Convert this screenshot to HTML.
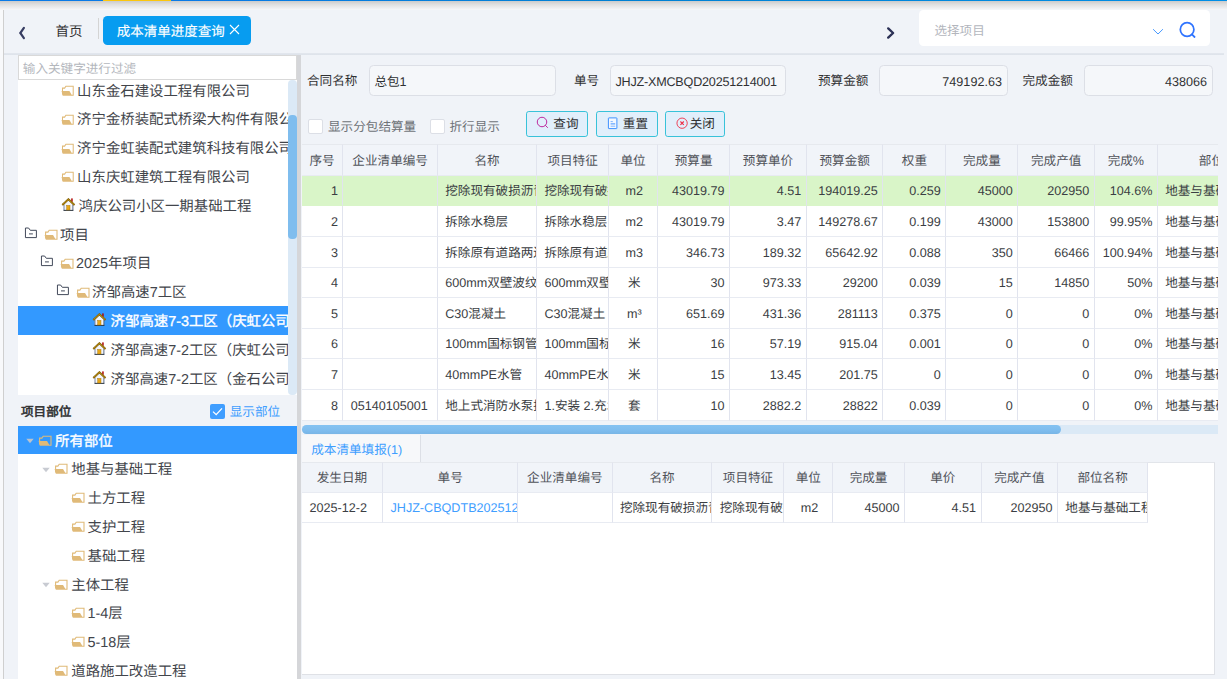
<!DOCTYPE html>
<html lang="zh-CN">
<head>
<meta charset="utf-8">
<title>成本清单进度查询</title>
<style>
*{box-sizing:border-box;margin:0;padding:0}
html,body{width:1227px;height:679px;overflow:hidden}
body{text-rendering:geometricPrecision;position:relative;background:#f0f3f8;font-family:"Liberation Sans",sans-serif;font-size:12.6px;color:#303133}
.abs{position:absolute}
/* top */
#topline{left:0;top:0;width:1227px;height:1px;background:linear-gradient(90deg,#0a7ae6 0%,#0a7ae6 15%,#0080d2 50%,#008ee6 100%)}
#topyellow{left:103px;top:0;width:68px;height:1px;background:#fbc60d}
#topshadow{left:0;top:1px;width:1227px;height:9px;background:linear-gradient(#cbcbcb,#dedede 35%,#f4f5f7 95%,#f0f3f8)}
#leftstrip{left:0;top:10px;width:3px;height:669px;background:#f8f9fb}
#leftline{left:3px;top:10px;width:1px;height:669px;background:#cfcfcf}
#hline{left:4px;top:53px;width:1220px;height:2px;background:linear-gradient(#e3e7ee,#dde2ea)}
/* tabs */
#tabblue{left:103px;top:16px;width:148px;height:29px;background:#079cf0;border-radius:4.5px;color:#fff;-webkit-text-stroke:0.15px #fff;font-size:13.5px;line-height:31px;padding-left:13.8px;white-space:nowrap}
#home{left:55.6px;top:16px;height:29px;line-height:31.4px;font-size:13.5px;color:#303133}
#sep{left:98px;top:18px;width:1px;height:21px;background:#d4d4d4}
/* select */
#selbox{left:919px;top:10px;width:291px;height:36px;background:#fff;border-radius:4.5px}
#selbox span{position:absolute;left:15.4px;top:0;line-height:42.6px;color:#b3b6bd;font-size:12.6px}
/* left panel */
#filter{left:18px;top:55px;width:279px;height:24.5px;background:#fff;border:1px solid #d9d9d9;font-size:12.6px;color:#b4b7bd;line-height:27px;padding-left:3.8px}
#tree1{left:18px;top:79.5px;width:279px;height:315.5px;background:#fff;overflow:hidden}
#tree1 .trow{width:270px;overflow:hidden}
#tree2{left:18px;top:426px;width:279px;height:253px;background:#fff;overflow:hidden}
.trow{position:absolute;left:0;width:279px;height:28.8px;line-height:28.8px;font-size:14.4px;white-space:nowrap;color:#42454b}
.trow.sel{background:#3399ff;color:#fff;-webkit-text-stroke:0.35px #fff}
.trow span{position:absolute;top:2px;margin-left:-0.4px}
.ico{position:absolute}
#strack{left:288px;top:80px;width:8.5px;height:314.5px;background:#dbe9f6;border-radius:4px}
#sthumb{left:288px;top:115px;width:8.5px;height:123.5px;background:#7fbdee;border-radius:4px}
#splitter{left:296.9px;top:55px;width:4px;height:624px;background:#d5d6d9}
#lbl2{left:21px;top:396px;height:30px;line-height:32px;-webkit-text-stroke:0.55px #303133;font-size:12.6px;color:#303133}
#cb2{left:210px;top:404px;width:15px;height:15px;background:#409eff;border-radius:2px}
#cb2l{left:229.7px;top:396px;height:30px;line-height:32.6px;color:#409eff;font-size:12.6px}
/* form */
.flabel{position:absolute;top:65px;height:30px;line-height:32.4px;font-size:12.6px;color:#303133;white-space:nowrap}
.finput{position:absolute;top:65px;height:30.5px;background:#f5f7fa;border:1px solid #dcdfe6;border-radius:4.5px;line-height:32.6px;font-size:12.6px;color:#303133;padding:0 5.5px 0 4.4px;white-space:nowrap;overflow:hidden}
.cb{position:absolute;top:119px;width:14.5px;height:14.5px;background:#fff;border:1px solid #dcdfe6;border-radius:2px}
.cbl{position:absolute;top:112px;height:28.8px;line-height:30.8px;color:#6f7379;font-size:12.6px;white-space:nowrap}
.btn{position:absolute;top:111px;height:26px;background:#e1effb;border:1px solid #38c2d9;border-radius:2.8px;font-size:12.6px;line-height:24px;color:#303133;white-space:nowrap}
.btn span{position:absolute;top:0}
/* tables */
.tbl{position:absolute;overflow:hidden}
.tr{position:absolute;left:0;height:30.6px;display:flex;white-space:nowrap}
.tr>div{height:30.6px;line-height:32.2px;border-right:1px solid #e1e4ee;border-bottom:1px solid #e8ebf2;overflow:hidden;padding:0 4.5px;flex:none;font-size:12.6px;color:#3b3e43}
.tr i{font-style:normal;position:relative;top:var(--d)}
.tr.h>div{background:#f1f4f9;text-align:center;color:#505359}
.tr.g>div{background:#d9f5c8;border-bottom-color:#d9f5c8}
.tr.t1h,.tr.t1h>div{height:31.6px}
.tr.t1h>div{border-top:1px solid #e6e9ee;line-height:32.6px}
.tr.t2,.tr.t2>div{height:30px}
.tr.t2>div{line-height:31.2px}
.tr.t2h,.tr.t2h>div{height:30.3px}
.tr.t2h>div{line-height:31.2px;border-top:1px solid #e6e9ee}
.tr.w>div{background:#fff}
.r{text-align:right}.finput.r{padding-right:4.6px}.c{text-align:center;padding-left:7px !important}.l{text-align:left;padding-left:7.3px !important;padding-right:0 !important}
</style>
</head>
<body>
<div class="abs" id="topshadow"></div>
<div class="abs" id="topline"></div>
<div class="abs" id="topyellow"></div>
<div class="abs" id="leftstrip"></div>
<div class="abs" id="leftline"></div>
<div class="abs" id="hline"></div>

<!-- TABBAR -->
<svg class="abs" style="left:16px;top:25px" width="12" height="16" viewBox="0 0 12 16"><path d="M7.9 2.9 L4.3 8 L7.9 13.1" fill="none" stroke="#373d62" stroke-width="2.2" stroke-linecap="round"/></svg>
<div class="abs" id="home">首页</div>
<div class="abs" id="sep"></div>
<div class="abs" id="tabblue">成本清单进度查询</div>
<svg class="abs" style="left:229px;top:24px" width="11" height="11" viewBox="0 0 11 11"><path d="M1 1 L10 10 M10 1 L1 10" stroke="#fff" stroke-width="1.1" fill="none"/></svg>
<svg class="abs" style="left:884px;top:25px" width="12" height="16" viewBox="0 0 12 16"><path d="M4.2 3.4 L9.1 8 L4.2 12.6" fill="none" stroke="#2c3156" stroke-width="2.4" stroke-linecap="round" stroke-linejoin="round"/></svg>
<div class="abs" id="selbox"><span>选择项目</span></div>
<svg class="abs" style="left:1150.7px;top:27.2px" width="14" height="10" viewBox="0 0 14 10"><path d="M2.1 2.2 L7 7 L11.9 2.2" fill="none" stroke="#3d94ff" stroke-width="0.95"/></svg>
<svg class="abs" style="left:1177px;top:20px" width="20" height="20" viewBox="0 0 20 20"><circle cx="10.1" cy="9.5" r="6.8" fill="none" stroke="#2f74ff" stroke-width="1.75"/><path d="M14.9 14.4 L17.6 17" stroke="#2f74ff" stroke-width="1.75" stroke-linecap="round"/></svg>

<!-- LEFT -->
<div class="abs" id="filter">输入关键字进行过滤</div>
<div class="abs" id="tree1">
<div class="trow" style="top:-3.7px"><svg class="ico" style="left:42.5px;top:9.3px" width="14.1" height="12" viewBox="0 0 15 12" preserveAspectRatio="none"><path d="M1.6 9.5 V3.1 H3.9 L5.2 1.3 H13 V10.3 H11.3" fill="none" stroke="#e0ba78" stroke-width="1.1"/><path d="M0.6 5.9 H9 L11.9 10.85 H1.8 Z" fill="#e0ba78"/></svg><span style="left:59.5px;top:1.81px">山东金石建设工程有限公司</span></div>
<div class="trow" style="top:25.1px"><svg class="ico" style="left:42.5px;top:9.3px" width="14.1" height="12" viewBox="0 0 15 12" preserveAspectRatio="none"><path d="M1.6 9.5 V3.1 H3.9 L5.2 1.3 H13 V10.3 H11.3" fill="none" stroke="#e0ba78" stroke-width="1.1"/><path d="M0.6 5.9 H9 L11.9 10.85 H1.8 Z" fill="#e0ba78"/></svg><span style="left:59.5px;top:1.01px">济宁金桥装配式桥梁大构件有限公司</span></div>
<div class="trow" style="top:53.9px"><svg class="ico" style="left:42.5px;top:9.3px" width="14.1" height="12" viewBox="0 0 15 12" preserveAspectRatio="none"><path d="M1.6 9.5 V3.1 H3.9 L5.2 1.3 H13 V10.3 H11.3" fill="none" stroke="#e0ba78" stroke-width="1.1"/><path d="M0.6 5.9 H9 L11.9 10.85 H1.8 Z" fill="#e0ba78"/></svg><span style="left:59.5px;top:1.21px">济宁金虹装配式建筑科技有限公司</span></div>
<div class="trow" style="top:82.7px"><svg class="ico" style="left:42.5px;top:9.3px" width="14.1" height="12" viewBox="0 0 15 12" preserveAspectRatio="none"><path d="M1.6 9.5 V3.1 H3.9 L5.2 1.3 H13 V10.3 H11.3" fill="none" stroke="#e0ba78" stroke-width="1.1"/><path d="M0.6 5.9 H9 L11.9 10.85 H1.8 Z" fill="#e0ba78"/></svg><span style="left:59.5px;top:1.41px">山东庆虹建筑工程有限公司</span></div>
<div class="trow" style="top:111.5px"><svg class="ico" style="left:42.5px;top:7px" width="15" height="14" viewBox="0 0 15 14"><rect x="10.2" y="0.4" width="1.5" height="3.4" fill="#b00606"/><path d="M2.9 6.4 L7.4 2.3 L11.9 6.4 V12.4 H2.9 Z" fill="#f3f5fb"/><path d="M3 6.6 V12.2" stroke="#6d7c98" stroke-width="0.9" fill="none"/><path d="M11.9 6.6 V12.2" stroke="#4b5a76" stroke-width="0.9" fill="none"/><rect x="2.5" y="11.9" width="9.9" height="0.9" fill="#18222c"/><rect x="5.7" y="7.4" width="3.3" height="4.6" fill="#e8a717" stroke="#a8780c" stroke-width="0.45"/><path d="M1.3 6.9 L7.4 1.3 L13.5 6.9" fill="none" stroke="#7d5b05" stroke-width="2"/><path d="M1.5 6.7 L7.4 1.35 L13.3 6.7" fill="none" stroke="#c39616" stroke-width="1"/></svg><span style="left:61px;top:1.61px">鸿庆公司小区一期基础工程</span></div>
<div class="trow" style="top:140.3px"><svg class="ico" style="left:6px;top:6.8px" width="14" height="12" viewBox="0 0 14 12"><path d="M1.45 1 H4.6 L6.3 3.3 H12.4 V10.6 H1.45 Z" fill="none" stroke="#434a5b" stroke-width="1"/><path d="M5 6.9 H8.9" stroke="#434a5b" stroke-width="1"/></svg><svg class="ico" style="left:25.5px;top:9.5px" width="15" height="12" viewBox="0 0 15 12" preserveAspectRatio="none"><path d="M1.6 9.5 V3.1 H3.9 L5.2 1.3 H13 V10.3 H11.3" fill="none" stroke="#e0ba78" stroke-width="1.1"/><path d="M0.6 5.9 H9 L11.9 10.85 H1.8 Z" fill="#e0ba78"/></svg><span style="left:42.5px;top:1.81px">项目</span></div>
<div class="trow" style="top:169.1px"><svg class="ico" style="left:22px;top:6.8px" width="14" height="12" viewBox="0 0 14 12"><path d="M1.45 1 H4.6 L6.3 3.3 H12.4 V10.6 H1.45 Z" fill="none" stroke="#434a5b" stroke-width="1"/><path d="M5 6.9 H8.9" stroke="#434a5b" stroke-width="1"/></svg><svg class="ico" style="left:41.5px;top:9.5px" width="15" height="12" viewBox="0 0 15 12" preserveAspectRatio="none"><path d="M1.6 9.5 V3.1 H3.9 L5.2 1.3 H13 V10.3 H11.3" fill="none" stroke="#e0ba78" stroke-width="1.1"/><path d="M0.6 5.9 H9 L11.9 10.85 H1.8 Z" fill="#e0ba78"/></svg><span style="left:58.5px;top:1.01px">2025年项目</span></div>
<div class="trow" style="top:197.9px"><svg class="ico" style="left:38px;top:6.8px" width="14" height="12" viewBox="0 0 14 12"><path d="M1.45 1 H4.6 L6.3 3.3 H12.4 V10.6 H1.45 Z" fill="none" stroke="#434a5b" stroke-width="1"/><path d="M5 6.9 H8.9" stroke="#434a5b" stroke-width="1"/></svg><svg class="ico" style="left:57.5px;top:9.5px" width="15" height="12" viewBox="0 0 15 12" preserveAspectRatio="none"><path d="M1.6 9.5 V3.1 H3.9 L5.2 1.3 H13 V10.3 H11.3" fill="none" stroke="#e0ba78" stroke-width="1.1"/><path d="M0.6 5.9 H9 L11.9 10.85 H1.8 Z" fill="#e0ba78"/></svg><span style="left:74.5px;top:1.21px">济邹高速7工区</span></div>
<div class="trow sel" style="top:226.7px"><svg class="ico" style="left:74.0px;top:7px" width="15" height="14" viewBox="0 0 15 14"><rect x="10.2" y="0.4" width="1.5" height="3.4" fill="#b00606"/><path d="M2.9 6.4 L7.4 2.3 L11.9 6.4 V12.4 H2.9 Z" fill="#f3f5fb"/><path d="M3 6.6 V12.2" stroke="#6d7c98" stroke-width="0.9" fill="none"/><path d="M11.9 6.6 V12.2" stroke="#4b5a76" stroke-width="0.9" fill="none"/><rect x="2.5" y="11.9" width="9.9" height="0.9" fill="#18222c"/><rect x="5.7" y="7.4" width="3.3" height="4.6" fill="#e8a717" stroke="#a8780c" stroke-width="0.45"/><path d="M1.3 6.9 L7.4 1.3 L13.5 6.9" fill="none" stroke="#7d5b05" stroke-width="2"/><path d="M1.5 6.7 L7.4 1.35 L13.3 6.7" fill="none" stroke="#c39616" stroke-width="1"/></svg><span style="left:93.0px;top:1.41px">济邹高速7-3工区（庆虹公司）</span></div>
<div class="trow" style="top:255.5px"><svg class="ico" style="left:74.0px;top:7px" width="15" height="14" viewBox="0 0 15 14"><rect x="10.2" y="0.4" width="1.5" height="3.4" fill="#b00606"/><path d="M2.9 6.4 L7.4 2.3 L11.9 6.4 V12.4 H2.9 Z" fill="#f3f5fb"/><path d="M3 6.6 V12.2" stroke="#6d7c98" stroke-width="0.9" fill="none"/><path d="M11.9 6.6 V12.2" stroke="#4b5a76" stroke-width="0.9" fill="none"/><rect x="2.5" y="11.9" width="9.9" height="0.9" fill="#18222c"/><rect x="5.7" y="7.4" width="3.3" height="4.6" fill="#e8a717" stroke="#a8780c" stroke-width="0.45"/><path d="M1.3 6.9 L7.4 1.3 L13.5 6.9" fill="none" stroke="#7d5b05" stroke-width="2"/><path d="M1.5 6.7 L7.4 1.35 L13.3 6.7" fill="none" stroke="#c39616" stroke-width="1"/></svg><span style="left:93.0px;top:1.61px">济邹高速7-2工区（庆虹公司）</span></div>
<div class="trow" style="top:284.3px"><svg class="ico" style="left:74.0px;top:7px" width="15" height="14" viewBox="0 0 15 14"><rect x="10.2" y="0.4" width="1.5" height="3.4" fill="#b00606"/><path d="M2.9 6.4 L7.4 2.3 L11.9 6.4 V12.4 H2.9 Z" fill="#f3f5fb"/><path d="M3 6.6 V12.2" stroke="#6d7c98" stroke-width="0.9" fill="none"/><path d="M11.9 6.6 V12.2" stroke="#4b5a76" stroke-width="0.9" fill="none"/><rect x="2.5" y="11.9" width="9.9" height="0.9" fill="#18222c"/><rect x="5.7" y="7.4" width="3.3" height="4.6" fill="#e8a717" stroke="#a8780c" stroke-width="0.45"/><path d="M1.3 6.9 L7.4 1.3 L13.5 6.9" fill="none" stroke="#7d5b05" stroke-width="2"/><path d="M1.5 6.7 L7.4 1.35 L13.3 6.7" fill="none" stroke="#c39616" stroke-width="1"/></svg><span style="left:93.0px;top:1.81px">济邹高速7-2工区（金石公司）</span></div>
</div>
<div class="abs" id="strack"></div>
<div class="abs" id="sthumb"></div>
<div class="abs" id="lbl2">项目部位</div>
<div class="abs" id="cb2"><svg width="15" height="15" viewBox="0 0 15 15" style="position:absolute;left:0;top:0"><path d="M3 7.6 L6.2 10.6 L12 4.4" fill="none" stroke="#fff" stroke-width="1.3"/></svg></div>
<div class="abs" id="cb2l">显示部位</div>
<div class="abs" id="tree2">
<div class="trow sel" style="top:-0.4px"><svg class="ico" style="left:8.0px;top:12px" width="8" height="6" viewBox="0 0 8 6"><path d="M0.3 0.8 H7.7 L4 5.3 Z" fill="#b9c3cf"/></svg><svg class="ico" style="left:20.2px;top:9.5px" width="15" height="12" viewBox="0 0 15 12" preserveAspectRatio="none"><path d="M1.6 9.5 V3.1 H3.9 L5.2 1.3 H13 V10.3 H11.3" fill="none" stroke="#e0ba78" stroke-width="1.1"/><path d="M0.6 5.9 H9 L11.9 10.85 H1.8 Z" fill="#e0ba78"/></svg><span style="left:37.5px;top:2.01px">所有部位</span></div>
<div class="trow" style="top:28.4px"><svg class="ico" style="left:24.2px;top:12.7px" width="8" height="6" viewBox="0 0 8 6"><path d="M0.3 0.8 H7.7 L4 5.3 Z" fill="#c8cbd2"/></svg><svg class="ico" style="left:36.0px;top:9.0px" width="15" height="12" viewBox="0 0 15 12" preserveAspectRatio="none"><path d="M1.6 9.5 V3.1 H3.9 L5.2 1.3 H13 V10.3 H11.3" fill="none" stroke="#e0ba78" stroke-width="1.1"/><path d="M0.6 5.9 H9 L11.9 10.85 H1.8 Z" fill="#e0ba78"/></svg><span style="left:53.7px;top:1.21px">地基与基础工程</span></div>
<div class="trow" style="top:57.2px"><svg class="ico" style="left:52.5px;top:8.9px" width="15" height="12" viewBox="0 0 15 12" preserveAspectRatio="none"><path d="M1.6 9.5 V3.1 H3.9 L5.2 1.3 H13 V10.3 H11.3" fill="none" stroke="#e0ba78" stroke-width="1.1"/><path d="M0.6 5.9 H9 L11.9 10.85 H1.8 Z" fill="#e0ba78"/></svg><span style="left:69.9px;top:1.41px">土方工程</span></div>
<div class="trow" style="top:86.0px"><svg class="ico" style="left:52.5px;top:8.9px" width="15" height="12" viewBox="0 0 15 12" preserveAspectRatio="none"><path d="M1.6 9.5 V3.1 H3.9 L5.2 1.3 H13 V10.3 H11.3" fill="none" stroke="#e0ba78" stroke-width="1.1"/><path d="M0.6 5.9 H9 L11.9 10.85 H1.8 Z" fill="#e0ba78"/></svg><span style="left:69.9px;top:1.61px">支护工程</span></div>
<div class="trow" style="top:114.8px"><svg class="ico" style="left:52.5px;top:8.9px" width="15" height="12" viewBox="0 0 15 12" preserveAspectRatio="none"><path d="M1.6 9.5 V3.1 H3.9 L5.2 1.3 H13 V10.3 H11.3" fill="none" stroke="#e0ba78" stroke-width="1.1"/><path d="M0.6 5.9 H9 L11.9 10.85 H1.8 Z" fill="#e0ba78"/></svg><span style="left:69.9px;top:1.81px">基础工程</span></div>
<div class="trow" style="top:143.6px"><svg class="ico" style="left:24.2px;top:12.7px" width="8" height="6" viewBox="0 0 8 6"><path d="M0.3 0.8 H7.7 L4 5.3 Z" fill="#c8cbd2"/></svg><svg class="ico" style="left:36.0px;top:9.0px" width="15" height="12" viewBox="0 0 15 12" preserveAspectRatio="none"><path d="M1.6 9.5 V3.1 H3.9 L5.2 1.3 H13 V10.3 H11.3" fill="none" stroke="#e0ba78" stroke-width="1.1"/><path d="M0.6 5.9 H9 L11.9 10.85 H1.8 Z" fill="#e0ba78"/></svg><span style="left:53.7px;top:2.01px">主体工程</span></div>
<div class="trow" style="top:172.4px"><svg class="ico" style="left:52.5px;top:8.9px" width="15" height="12" viewBox="0 0 15 12" preserveAspectRatio="none"><path d="M1.6 9.5 V3.1 H3.9 L5.2 1.3 H13 V10.3 H11.3" fill="none" stroke="#e0ba78" stroke-width="1.1"/><path d="M0.6 5.9 H9 L11.9 10.85 H1.8 Z" fill="#e0ba78"/></svg><span style="left:69.9px;top:1.21px">1-4层</span></div>
<div class="trow" style="top:201.2px"><svg class="ico" style="left:52.5px;top:8.9px" width="15" height="12" viewBox="0 0 15 12" preserveAspectRatio="none"><path d="M1.6 9.5 V3.1 H3.9 L5.2 1.3 H13 V10.3 H11.3" fill="none" stroke="#e0ba78" stroke-width="1.1"/><path d="M0.6 5.9 H9 L11.9 10.85 H1.8 Z" fill="#e0ba78"/></svg><span style="left:69.9px;top:1.41px">5-18层</span></div>
<div class="trow" style="top:230.0px"><svg class="ico" style="left:36.0px;top:9.0px" width="15" height="12" viewBox="0 0 15 12" preserveAspectRatio="none"><path d="M1.6 9.5 V3.1 H3.9 L5.2 1.3 H13 V10.3 H11.3" fill="none" stroke="#e0ba78" stroke-width="1.1"/><path d="M0.6 5.9 H9 L11.9 10.85 H1.8 Z" fill="#e0ba78"/></svg><span style="left:53.7px;top:1.61px">道路施工改造工程</span></div>
</div>
<div class="abs" id="splitter"></div>

<!-- FORM -->

<div class="flabel" style="left:307px">合同名称</div>
<div class="finput" style="left:369px;width:187px">总包1</div>
<div class="flabel" style="left:574px">单号</div>
<div class="finput" style="left:610px;width:176px;letter-spacing:-0.2px">JHJZ-XMCBQD20251214001</div>
<div class="flabel" style="left:818px">预算金额</div>
<div class="finput r" style="left:879px;width:128.5px">749192.63</div>
<div class="flabel" style="left:1022.5px">完成金额</div>
<div class="finput r" style="left:1084px;width:128.5px">438066</div>
<div class="cb" style="left:308px"></div><div class="cbl" style="left:328px">显示分包结算量</div>
<div class="cb" style="left:430px"></div><div class="cbl" style="left:449.5px">折行显示</div>
<div class="btn" style="left:526px;width:62px"><svg class="ico" style="left:9px;top:4.4px" width="14" height="14" viewBox="0 0 14 14"><circle cx="6.0" cy="6.0" r="4.75" fill="none" stroke="#bb1f98" stroke-width="0.95"/><path d="M9.5 9.5 L11.5 11.5" stroke="#bb1f98" stroke-width="0.95" stroke-linecap="round"/></svg><span style="left:26.3px">查询</span></div>
<div class="btn" style="left:596px;width:62px"><svg class="ico" style="left:9.6px;top:4.6px" width="12" height="14" viewBox="0 0 12 14"><rect x="1.4" y="0.9" width="8.5" height="10.7" rx="0.4" fill="#f3f8ff" stroke="#3f92ff" stroke-width="1"/><path d="M3.6 4.6 H5.8" stroke="#7db4ff" stroke-width="1"/><path d="M3.6 6.9 H8.2" stroke="#3f92ff" stroke-width="1"/><path d="M3.6 9.2 H8.2" stroke="#8fbfff" stroke-width="1.1"/></svg><span style="left:25.8px">重置</span></div>
<div class="btn" style="left:665px;width:60px"><svg class="ico" style="left:9.7px;top:4.8px" width="13" height="13" viewBox="0 0 13 13"><circle cx="6.1" cy="6.2" r="5.15" fill="none" stroke="#ee3a50" stroke-width="0.95"/><path d="M4.4 4.5 L7.8 7.9 M7.8 4.5 L4.4 7.9" stroke="#ee3048" stroke-width="1.1"/></svg><span style="left:23.7px">关闭</span></div>

<!-- TABLE1 -->
<div class="tbl" id="tbl1" style="left:301.6px;top:144.3px;width:916.4px;height:277.1px">
<div class="tr h t1h" style="top:0"><div style="width:41.8px">序号</div><div style="width:94.5px">企业清单编号</div><div style="width:99.2px">名称</div><div style="width:72px">项目特征</div><div style="width:49px">单位</div><div style="width:72px">预算量</div><div style="width:76.8px">预算单价</div><div style="width:76.5px">预算金额</div><div style="width:63px">权重</div><div style="width:72px">完成量</div><div style="width:76.5px">完成产值</div><div style="width:63px">完成%</div><div style="width:108px">部位</div></div>
<div class="tr g lh" style="top:31.6px;--d:-0.90px"><div class="r" style="width:41.8px"><i>1</i></div><div class="l" style="width:94.5px"></div><div class="l" style="width:99.2px"><i>挖除现有破损沥青路面</i></div><div class="l" style="width:72px"><i>挖除现有破损沥青</i></div><div class="c" style="width:49px"><i>m2</i></div><div class="r" style="width:72px"><i>43019.79</i></div><div class="r" style="width:76.8px"><i>4.51</i></div><div class="r" style="width:76.5px"><i>194019.25</i></div><div class="r" style="width:63px"><i>0.259</i></div><div class="r" style="width:72px"><i>45000</i></div><div class="r" style="width:76.5px"><i>202950</i></div><div class="r" style="width:63px"><i>104.6%</i></div><div class="l" style="width:108px"><i>地基与基础工程</i></div></div>
<div class="tr w lh" style="top:62.2px;--d:-0.50px"><div class="r" style="width:41.8px"><i>2</i></div><div class="l" style="width:94.5px"></div><div class="l" style="width:99.2px"><i>拆除水稳层</i></div><div class="l" style="width:72px"><i>拆除水稳层</i></div><div class="c" style="width:49px"><i>m2</i></div><div class="r" style="width:72px"><i>43019.79</i></div><div class="r" style="width:76.8px"><i>3.47</i></div><div class="r" style="width:76.5px"><i>149278.67</i></div><div class="r" style="width:63px"><i>0.199</i></div><div class="r" style="width:72px"><i>43000</i></div><div class="r" style="width:76.5px"><i>153800</i></div><div class="r" style="width:63px"><i>99.95%</i></div><div class="l" style="width:108px"><i>地基与基础工程</i></div></div>
<div class="tr w lh" style="top:92.8px;--d:-0.10px"><div class="r" style="width:41.8px"><i>3</i></div><div class="l" style="width:94.5px"></div><div class="l" style="width:99.2px"><i>拆除原有道路两边路缘石</i></div><div class="l" style="width:72px"><i>拆除原有道路两边</i></div><div class="c" style="width:49px"><i>m3</i></div><div class="r" style="width:72px"><i>346.73</i></div><div class="r" style="width:76.8px"><i>189.32</i></div><div class="r" style="width:76.5px"><i>65642.92</i></div><div class="r" style="width:63px"><i>0.088</i></div><div class="r" style="width:72px"><i>350</i></div><div class="r" style="width:76.5px"><i>66466</i></div><div class="r" style="width:63px"><i>100.94%</i></div><div class="l" style="width:108px"><i>地基与基础工程</i></div></div>
<div class="tr w lh" style="top:123.4px;--d:-0.70px"><div class="r" style="width:41.8px"><i>4</i></div><div class="l" style="width:94.5px"></div><div class="l" style="width:99.2px"><i>600mm双壁波纹管</i></div><div class="l" style="width:72px"><i>600mm双壁波纹管</i></div><div class="c" style="width:49px"><i>米</i></div><div class="r" style="width:72px"><i>30</i></div><div class="r" style="width:76.8px"><i>973.33</i></div><div class="r" style="width:76.5px"><i>29200</i></div><div class="r" style="width:63px"><i>0.039</i></div><div class="r" style="width:72px"><i>15</i></div><div class="r" style="width:76.5px"><i>14850</i></div><div class="r" style="width:63px"><i>50%</i></div><div class="l" style="width:108px"><i>地基与基础工程</i></div></div>
<div class="tr w lh" style="top:154.0px;--d:-0.30px"><div class="r" style="width:41.8px"><i>5</i></div><div class="l" style="width:94.5px"></div><div class="l" style="width:99.2px"><i>C30混凝土</i></div><div class="l" style="width:72px"><i>C30混凝土</i></div><div class="c" style="width:49px"><i>m³</i></div><div class="r" style="width:72px"><i>651.69</i></div><div class="r" style="width:76.8px"><i>431.36</i></div><div class="r" style="width:76.5px"><i>281113</i></div><div class="r" style="width:63px"><i>0.375</i></div><div class="r" style="width:72px"><i>0</i></div><div class="r" style="width:76.5px"><i>0</i></div><div class="r" style="width:63px"><i>0%</i></div><div class="l" style="width:108px"><i>地基与基础工程</i></div></div>
<div class="tr w lh" style="top:184.6px;--d:-0.90px"><div class="r" style="width:41.8px"><i>6</i></div><div class="l" style="width:94.5px"></div><div class="l" style="width:99.2px"><i>100mm国标钢管</i></div><div class="l" style="width:72px"><i>100mm国标钢管</i></div><div class="c" style="width:49px"><i>米</i></div><div class="r" style="width:72px"><i>16</i></div><div class="r" style="width:76.8px"><i>57.19</i></div><div class="r" style="width:76.5px"><i>915.04</i></div><div class="r" style="width:63px"><i>0.001</i></div><div class="r" style="width:72px"><i>0</i></div><div class="r" style="width:76.5px"><i>0</i></div><div class="r" style="width:63px"><i>0%</i></div><div class="l" style="width:108px"><i>地基与基础工程</i></div></div>
<div class="tr w lh" style="top:215.2px;--d:-0.50px"><div class="r" style="width:41.8px"><i>7</i></div><div class="l" style="width:94.5px"></div><div class="l" style="width:99.2px"><i>40mmPE水管</i></div><div class="l" style="width:72px"><i>40mmPE水管</i></div><div class="c" style="width:49px"><i>米</i></div><div class="r" style="width:72px"><i>15</i></div><div class="r" style="width:76.8px"><i>13.45</i></div><div class="r" style="width:76.5px"><i>201.75</i></div><div class="r" style="width:63px"><i>0</i></div><div class="r" style="width:72px"><i>0</i></div><div class="r" style="width:76.5px"><i>0</i></div><div class="r" style="width:63px"><i>0%</i></div><div class="l" style="width:108px"><i>地基与基础工程</i></div></div>
<div class="tr w lh" style="top:245.8px;--d:-0.10px"><div class="r" style="width:41.8px"><i>8</i></div><div class="l" style="width:94.5px"><i>05140105001</i></div><div class="l" style="width:99.2px"><i>地上式消防水泵接合器</i></div><div class="l" style="width:72px"><i>1.安装 2.充水试验</i></div><div class="c" style="width:49px"><i>套</i></div><div class="r" style="width:72px"><i>10</i></div><div class="r" style="width:76.8px"><i>2882.2</i></div><div class="r" style="width:76.5px"><i>28822</i></div><div class="r" style="width:63px"><i>0.039</i></div><div class="r" style="width:72px"><i>0</i></div><div class="r" style="width:76.5px"><i>0</i></div><div class="r" style="width:63px"><i>0%</i></div><div class="l" style="width:108px"><i>地基与基础工程</i></div></div>
</div>
<div class="abs" style="left:302px;top:425px;width:916px;height:9px;background:#dbe9f6;border-radius:4.5px 0 0 4.5px"></div>
<div class="abs" style="left:302px;top:425px;width:759px;height:9px;background:linear-gradient(#85c2f1,#7ebcee 60%,#78b5e6);border-radius:4.5px"></div>

<!-- BOTTOM -->
<div class="abs" style="left:301.6px;top:461.9px;width:913px;height:213.5px;background:#fff;border-top:1px solid #e2e5ea;border-right:1px solid #dfe1e6;border-bottom:1px solid #dfe1e6"></div>
<div class="abs" id="btab" style="left:301.6px;top:435.2px;width:119.6px;height:27.2px;background:#f7f8fa;border-right:1px solid #dcdfe6;color:#409eff;line-height:30.8px;padding-left:9.6px;font-size:12.6px;white-space:nowrap">成本清单填报(1)</div>
<div class="tbl" id="tbl2" style="left:301.6px;top:462.4px;width:848px;height:60.3px">
<div class="tr h t2 t2h" style="top:0"><div style="width:81.6px">发生日期</div><div style="width:134.9px">单号</div><div style="width:94.5px">企业清单编号</div><div style="width:99.9px">名称</div><div style="width:72px">项目特征</div><div style="width:48.6px">单位</div><div style="width:72px">完成量</div><div style="width:76.5px">单价</div><div style="width:76.5px">完成产值</div><div style="width:90px">部位名称</div></div>
<div class="tr w t2" style="top:30.3px"><div class="l" style="width:81.6px;padding-left:8px !important">2025-12-2</div><div class="l" style="width:134.9px"><span style="color:#409eff">JHJZ-CBQDTB20251214001</span></div><div class="l" style="width:94.5px"></div><div class="l" style="width:99.9px">挖除现有破损沥青路面</div><div class="l" style="width:72px">挖除现有破损沥青</div><div class="c" style="width:48.6px">m2</div><div class="r" style="width:72px">45000</div><div class="r" style="width:76.5px">4.51</div><div class="r" style="width:76.5px">202950</div><div class="l" style="width:90px">地基与基础工程</div></div>
</div>

</body>
</html>
